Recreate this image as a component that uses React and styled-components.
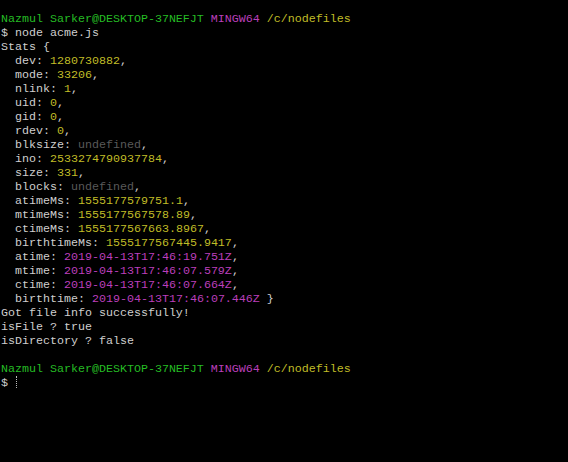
import React from "react";
import styled, { createGlobalStyle } from "styled-components";

const Global = createGlobalStyle`
  html, body {
    margin: 0;
    background: #000;
  }
`;

const Terminal = styled.div`
  width: 568px;
  height: 462px;
  box-sizing: border-box;
  background: #000;
  padding: 12px 0 0 1px;
  font-family: "Liberation Mono", "DejaVu Sans Mono", monospace;
  font-size: 11.67px;
  line-height: 14px;
  color: #cfcfcf;
  white-space: pre;
  overflow: hidden;
`;

const Line = styled.div`
  height: 14px;
`;

const colors = {
  green: "#25bc24",
  magenta: "#bc3fbc",
  yellow: "#c0bd27",
  gray: "#595959",
};

const C = styled.span`
  color: ${(p) => colors[p.c] || "inherit"};
`;

const Cursor = styled.span`
  display: inline-block;
  width: 1px;
  height: 12px;
  margin-left: 1px;
  vertical-align: -2px;
  border-left: 1px dotted #bbb;
`;

const Prompt = () => (
  <Line>
    <C c="green">Nazmul Sarker@DESKTOP-37NEFJT</C> <C c="magenta">MINGW64</C>{" "}
    <C c="yellow">/c/nodefiles</C>
  </Line>
);

const stats = [
  ["dev", "1280730882", "yellow"],
  ["mode", "33206", "yellow"],
  ["nlink", "1", "yellow"],
  ["uid", "0", "yellow"],
  ["gid", "0", "yellow"],
  ["rdev", "0", "yellow"],
  ["blksize", "undefined", "gray"],
  ["ino", "2533274790937784", "yellow"],
  ["size", "331", "yellow"],
  ["blocks", "undefined", "gray"],
  ["atimeMs", "1555177579751.1", "yellow"],
  ["mtimeMs", "1555177567578.89", "yellow"],
  ["ctimeMs", "1555177567663.8967", "yellow"],
  ["birthtimeMs", "1555177567445.9417", "yellow"],
  ["atime", "2019-04-13T17:46:19.751Z", "magenta"],
  ["mtime", "2019-04-13T17:46:07.579Z", "magenta"],
  ["ctime", "2019-04-13T17:46:07.664Z", "magenta"],
  ["birthtime", "2019-04-13T17:46:07.446Z", "magenta"],
];

export default function App() {
  return (
    <>
      <Global />
      <Terminal>
        <Prompt />
        <Line>$ node acme.js</Line>
        <Line>Stats {"{"}</Line>
        {stats.map(([k, v, c], i) => (
          <Line key={k}>
            {"  "}
            {k}: <C c={c}>{v}</C>
            {i === stats.length - 1 ? " }" : ","}
          </Line>
        ))}
        <Line>Got file info successfully!</Line>
        <Line>isFile ? true</Line>
        <Line>isDirectory ? false</Line>
        <Line />
        <Prompt />
        <Line>
          ${" "}
          <Cursor />
        </Line>
      </Terminal>
    </>
  );
}
